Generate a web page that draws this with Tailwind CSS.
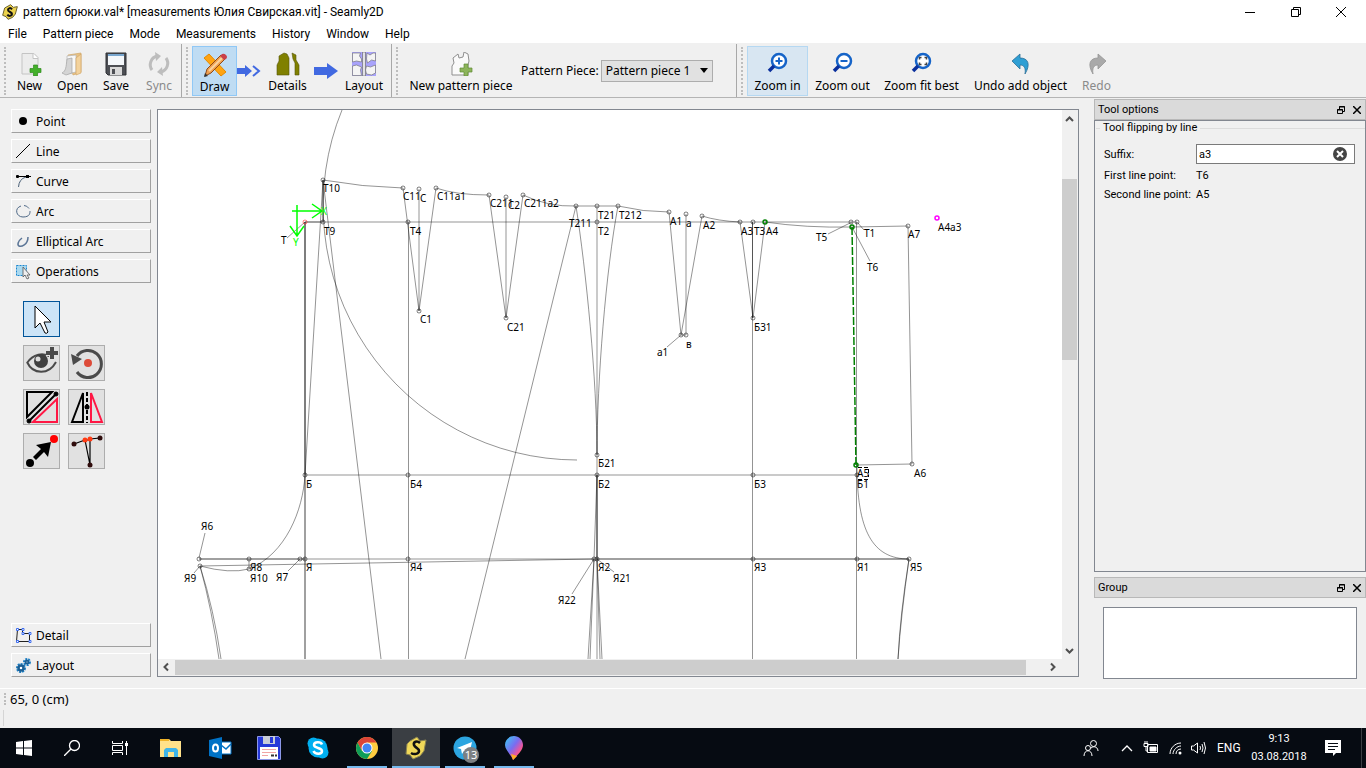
<!DOCTYPE html>
<html lang="en">
<head>
    <meta charset="UTF-8">
    <meta name="viewport" content="width=device-width, initial-scale=1.0">
    <title>pattern брюки.val* - Seamly2D</title>

    <!-- Include Tailwind CSS -->
    <script src="https://cdn.jsdelivr.net/npm/@tailwindcss/browser@4"></script>
</head>

<body class="h-screen flex flex-col overflow-hidden bg-[#f0f0f0] text-black font-['Noto_Sans','Open_Sans',sans-serif] text-[12px] leading-4 whitespace-nowrap">

    <!-- Title bar -->
    <header class="h-6 shrink-0 flex items-center bg-white pl-[2px] font-[Roboto,sans-serif]">
        <svg class="w-4 h-4 shrink-0" viewBox="0 0 24 24">
            <path d="M4 6l9-5 4 4 6-1-3 11-4 5-7 3-3-4-5-2z" fill="#ecd24c" stroke="#6b6230" stroke-width="1.500"/>
            <path d="M15 8c-2-3-6-2-6 1s6 3 6 6-5 4-7 1" fill="none" stroke="#111" stroke-width="3"/>
        </svg>
        <h1 class="ml-[5px]">pattern брюки.val* [measurements Юлия Свирская.vit] - Seamly2D</h1>
        <div class="ml-auto flex pr-[2px]">
            <button class="w-[46px] h-5 grid place-items-center" aria-label="Minimize">
                <svg class="w-[10px] h-[10px]" viewBox="0 0 10 10"><path d="M0 5.500h10" stroke="#000"/></svg>
            </button>
            <button class="w-[45px] h-5 grid place-items-center" aria-label="Restore">
                <svg class="w-[10px] h-[10px]" viewBox="0 0 10 10"><path d="M.5 2.500h7v7h-7zM2.500 2.500v-2h7v7h-2" fill="none" stroke="#000"/></svg>
            </button>
            <button class="w-[46px] h-5 grid place-items-center" aria-label="Close">
                <svg class="w-[10px] h-[10px]" viewBox="0 0 10 10"><path d="M0 0l10 10M10 0L0 10" stroke="#000"/></svg>
            </button>
        </div>
    </header>

    <!-- Menu -->
    <nav class="h-5 shrink-0 flex items-center gap-4 bg-white pl-2 border-b border-[#f0f0f0] font-[Roboto,sans-serif]">
        <button>File</button>
        <button>Pattern piece</button>
        <button>Mode</button>
        <button>Measurements</button>
        <button>History</button>
        <button>Window</button>
        <button>Help</button>
    </nav>

    <!-- Toolbar -->
    <div class="h-[54px] shrink-0 flex border-b border-[#b4b4b4]">
        <div class="w-[182px] flex items-center border-r border-[#a8a8a8] pl-1">
            <span class="w-1 h-12 border-l-2 border-dotted border-[#bdbdbd]"></span>
            <button class="w-[43px] h-[50px] flex flex-col items-center justify-end pb-[2px]">
                <svg class="w-6 h-6 mb-[2px]" viewBox="0 0 24 24">
                    <path d="M4 1.500h12l4 4v16.500H4z" fill="#ececec" stroke="#c4c4c4"/>
                    <path d="M15 1.500v5h5" fill="#fff" stroke="#c4c4c4"/>
                    <path d="M15.500 13h4v3.500H23v4h-3.500V24h-4v-3.500H12v-4h3.500z" fill="#43b02a" stroke="#2f8a1c" stroke-width=".7"/>
                </svg>
                <span>New</span>
            </button>
            <button class="w-[43px] h-[50px] flex flex-col items-center justify-end pb-[2px]">
                <svg class="w-6 h-6 mb-[2px]" viewBox="0 0 24 24">
                    <path d="M7 3l13-2v19l-8 3z" fill="#e8c183" stroke="#d1a868" stroke-width=".7"/>
                    <path d="M6 4l9-1v17l-9 2z" fill="#f8f8f8" stroke="#b5b5b5" stroke-width=".7"/>
                    <path d="M1 21c4-2 4-6 5-14l5-1v15l-6 2z" fill="#d4d4d4" stroke="#a5a5a5" stroke-width=".7"/>
                    <path d="M15 6l5-4v19l-5 2z" fill="#f3d29c" stroke="#d1a868" stroke-width=".7"/>
                </svg>
                <span>Open</span>
            </button>
            <button class="w-[44px] h-[50px] flex flex-col items-center justify-end pb-[2px]">
                <svg class="w-6 h-6 mb-[2px]" viewBox="0 0 24 24">
                    <path d="M2 1h20v22H4l-2-2z" fill="#4d4f54" stroke="#2f3135"/>
                    <path d="M4 2h16v11H4z" fill="#f4f7fa"/>
                    <path d="M4 2h16v2H4z" fill="#79a7cf"/>
                    <path d="M6 15h12v8H6z" fill="#d9d9d9"/>
                    <path d="M8 17h3v5H8z" fill="#4d4f54"/>
                </svg>
                <span>Save</span>
            </button>
            <button class="w-[42px] h-[50px] flex flex-col items-center justify-end pb-[2px] text-[#8a8a8a]" disabled>
                <svg class="w-6 h-6 mb-[2px]" viewBox="0 0 24 24" fill="none" stroke="#bdbdbd" stroke-width="3">
                    <path d="M5 18A9 9 0 0 1 10 4M19 6A9 9 0 0 1 14 20"/>
                    <path d="M8 0l6 4-5 5zM16 24l-6-4 5-5z" fill="#bdbdbd" stroke="none"/>
                </svg>
                <span>Sync</span>
            </button>
        </div>

        <div class="w-[210px] flex items-center border-r border-[#a8a8a8] pl-1">
            <span class="w-[6px] h-12 border-l-2 border-dotted border-[#bdbdbd]"></span>
            <button class="w-[45px] h-[50px] flex flex-col items-center justify-end bg-[#bfdcf3] border border-[#90c8f6]">
                <svg class="w-6 h-6 mb-[2px]" viewBox="0 0 24 24">
                    <path d="M6 1l17 18-5 4L1 5z" fill="#ffa412" stroke="#e58a00"/>
                    <path d="M2 23l2-7L18 2l4 4L8 20z" fill="#f0a050" stroke="#8c4a1c"/>
                    <path d="M6 18L20 4" stroke="#fbd2a0" stroke-width="2"/>
                    <path d="M17 3l2-2q2-1 4 1t0 4l-2 1z" fill="#c9404a"/>
                    <path d="M1 24l1-4 3 3z" fill="#333"/>
                </svg>
                <span>Draw</span>
            </button>
            <svg class="w-6 h-5" viewBox="0 0 24 20">
                <path d="M0 7h8V4l7 6-7 6v-3H0z" fill="#4169e1"/>
                <path d="M16 5l6 5-6 5" fill="none" stroke="#4169e1" stroke-width="2"/>
            </svg>
            <button class="w-[53px] h-[50px] flex flex-col items-center justify-end pb-[2px]">
                <svg class="w-6 h-6 mb-[2px]" viewBox="0 0 24 24" fill="#808000" stroke="#56560a" stroke-width=".6">
                    <path d="M1 23V13l2-4V4l5-3 3 1 2 4v17zM16 1l4 2v5l3 5v10h-4V11l-2-4z"/>
                </svg>
                <span>Details</span>
            </button>
            <svg class="w-6 h-5" viewBox="0 0 24 20"><path d="M0 6h13V2l11 8-11 8v-4H0z" fill="#4169e1"/></svg>
            <button class="w-[52px] h-[50px] flex flex-col items-center justify-end pb-[2px]">
                <svg class="w-6 h-6 mb-[2px]" viewBox="0 0 24 24">
                    <path d="M0 0h24v24H0z" fill="#a9a3fb"/>
                    <path d="M.5 1h8l-1 3 2 3V10l-5-1-4 1zM15 1l3 2 3-2h2.500v8l-4-1-4 3-1-4zM.5 14l4-1 5 2-1 3 1 5.500h-9zM14.500 14l4 1 5-2v8l-4 2-5-1-1-4z" fill="#f4f4f4" stroke="#77777d" stroke-width=".7"/>
                    <path d="M10.500 0h3v24h-3z" fill="#e2e2e5" stroke="#6d6d73" stroke-width=".7"/>
                </svg>
                <span>Layout</span>
            </button>
        </div>

        <div class="w-[345px] flex items-center border-r border-[#a8a8a8] pl-1">
            <span class="w-[6px] h-12 border-l-2 border-dotted border-[#bdbdbd]"></span>
            <button class="w-[118px] h-[50px] flex flex-col items-center justify-end pb-[2px]">
                <svg class="w-6 h-6 mb-[2px]" viewBox="0 0 24 24">
                    <path d="M3 23V14l2-3-1-5 5-4 1 4 4-1 1-5 4 2 1 7-1 4v10z" fill="#fafafa" stroke="#8f8f8f"/>
                    <path d="M15 12h4v4h4v4h-4v4h-4v-4h-4v-4h4z" fill="#8cb45a" stroke="#5f8a35" stroke-width=".7"/>
                </svg>
                <span>New pattern piece</span>
            </button>
            <label for="piece" class="ml-px">Pattern Piece:</label>
            <div class="relative ml-[2px]">
                <select id="piece" class="appearance-none block w-28 h-[22px] pl-1 bg-[#e1e1e1] border border-[#adadad] leading-5">
                    <option>Pattern piece 1</option>
                </select>
                <svg class="absolute right-[5px] top-2 w-2 h-[5px] pointer-events-none" viewBox="0 0 8 5"><path d="M0 0h8L4 5z"/></svg>
            </div>
        </div>

        <div class="flex-1 flex items-center pl-1">
            <span class="w-[6px] h-12 border-l-2 border-dotted border-[#bdbdbd]"></span>
            <button class="w-[61px] h-[50px] flex flex-col items-center justify-end pb-px bg-[#d8e6f2] border border-[#b5d8f2]">
                <svg class="w-6 h-6 mb-[2px]" viewBox="0 0 24 24" fill="none">
                    <circle cx="13" cy="9" r="7" fill="#fff" stroke="#1664c8" stroke-width="2.500"/>
                    <path d="M8 14l-5 5" stroke="#0a2f9c" stroke-width="3.500"/>
                    <path d="M13 5.500v7M9.500 9h7" stroke="#1664c8" stroke-width="2"/>
                </svg>
                <span>Zoom in</span>
            </button>
            <button class="w-[69px] h-[50px] flex flex-col items-center justify-end pb-[2px]">
                <svg class="w-6 h-6 mb-[2px]" viewBox="0 0 24 24" fill="none">
                    <circle cx="13" cy="9" r="7" fill="#fff" stroke="#1664c8" stroke-width="2.500"/>
                    <path d="M8 14l-5 5" stroke="#0a2f9c" stroke-width="3.500"/>
                    <path d="M9.500 9h7" stroke="#1664c8" stroke-width="2"/>
                </svg>
                <span>Zoom out</span>
            </button>
            <button class="w-[89px] h-[50px] flex flex-col items-center justify-end pb-[2px]">
                <svg class="w-6 h-6 mb-[2px]" viewBox="0 0 24 24" fill="none">
                    <circle cx="13" cy="9" r="7" fill="#fff" stroke="#1664c8" stroke-width="2.500"/>
                    <path d="M8 14l-5 5" stroke="#0a2f9c" stroke-width="3.500"/>
                    <path d="M9.500 7.500v-2h2M14.500 5.500h2v2M16.500 10.500v2h-2M11.500 12.500h-2v-2" stroke="#444" stroke-width="1.500"/>
                </svg>
                <span>Zoom fit best</span>
            </button>
            <button class="w-[109px] h-[50px] flex flex-col items-center justify-end pb-[2px]">
                <svg class="w-6 h-6 mb-[2px]" viewBox="0 0 24 24">
                    <path d="M3 9l8-7v4c8 0 11 6 5 16 1-6-1-9-5-9v4z" fill="#2f9fd4" stroke="#2b6f98" stroke-width=".8"/>
                </svg>
                <span>Undo add object</span>
            </button>
            <button class="w-[43px] h-[50px] flex flex-col items-center justify-end pb-[2px] text-[#8a8a8a]" disabled>
                <svg class="w-6 h-6 mb-[2px]" viewBox="0 0 24 24">
                    <path d="M21 9l-8-7v4c-8 0-11 6-5 16-1-6 1-9 5-9v4z" fill="#a9a9a9" stroke="#969696" stroke-width=".8"/>
                </svg>
                <span>Redo</span>
            </button>
        </div>
    </div>

    <!-- Work area -->
    <main class="flex-1 min-h-0 flex">

        <!-- Tool box -->
        <aside class="w-[157px] shrink-0 flex flex-col pt-[11px] pb-[11px] pl-[11px] pr-[6px]">
            <div class="flex flex-col gap-[6px]">
                <button class="h-6 flex items-center gap-1 pl-1 pt-[2px] border border-t-white border-l-white border-r-[#a0a0a0] border-b-[#a0a0a0]">
                    <svg class="w-4 h-4" viewBox="0 0 16 16"><circle cx="7" cy="7" r="4"/></svg>Point
                </button>
                <button class="h-6 flex items-center gap-1 pl-1 pt-[2px] border border-t-white border-l-white border-r-[#a0a0a0] border-b-[#a0a0a0]">
                    <svg class="w-4 h-4" viewBox="0 0 16 16"><path d="M0 14L14 0" stroke="#000"/></svg>Line
                </button>
                <button class="h-6 flex items-center gap-1 pl-1 pt-[2px] border border-t-white border-l-white border-r-[#a0a0a0] border-b-[#a0a0a0]">
                    <svg class="w-4 h-4" viewBox="0 0 16 16" fill="none"><path d="M2.500 13Q3 5 10 3" stroke="#4a6078"/><path d="M1 2.500h14M.5 1.500h2v2h-2z" stroke="#000"/><path d="M10 1h3v3h-3z" fill="#000"/></svg>Curve
                </button>
                <button class="h-6 flex items-center gap-1 pl-1 pt-[2px] border border-t-white border-l-white border-r-[#a0a0a0] border-b-[#a0a0a0]">
                    <svg class="w-4 h-4" viewBox="0 0 16 16"><path d="M5 2C-2 4 0 13 7 13S14 9 14 7M8 1.500q3 0 5 3" fill="none" stroke="#4f6987"/></svg>Arc
                </button>
                <button class="h-6 flex items-center gap-1 pl-1 pt-[2px] border border-t-white border-l-white border-r-[#a0a0a0] border-b-[#a0a0a0]">
                    <svg class="w-4 h-4" viewBox="0 0 16 16"><path d="M6 4C2 7 1 11 3 12S12 11 12 3" fill="none" stroke="#5b7596" stroke-width="1.500"/></svg>Elliptical Arc
                </button>
                <button class="h-6 flex items-center gap-1 pl-1 pt-[2px] border border-t-white border-l-white border-r-[#a0a0a0] border-b-[#a0a0a0]">
                    <svg class="w-4 h-4" viewBox="0 0 16 16"><path d="M.5 1.500h10v10H.5z" fill="#a9d9f0" stroke="#1a86cf" stroke-dasharray="2 1"/><path d="M7 3v10l2-2 2 4 2-1-2-3h3z" fill="#eee" stroke="#555" stroke-width=".8"/></svg>Operations
                </button>
            </div>

            <div class="grid grid-cols-[37px_37px] auto-rows-[36px] gap-2 pl-3 pt-[18px]">
                <button class="col-start-1 grid place-items-center bg-[#cce4f7] border border-[#005499]" aria-label="Pointer">
                    <svg class="w-[34px] h-[34px]" viewBox="0 0 34 34"><path d="M10 4v22l5-5 5 10q2 1 3-1l-4-10h7z" fill="#fff" stroke="#000"/></svg>
                </button>
                <button class="col-start-1 grid place-items-center bg-[#e1e1e1] border border-[#adadad]" aria-label="Group">
                    <svg class="w-[34px] h-[34px]" viewBox="0 0 34 34" fill="none" stroke="#4a4a4a">
                        <path d="M2 17C8 8 18 6 26 11M2 16C8 29 24 29 31 16" stroke-width="2"/>
                        <circle cx="16" cy="15" r="7" fill="#3f3f3f" stroke="none"/>
                        <circle cx="13" cy="13" r="2.500" fill="#ddd" stroke="none"/>
                        <path d="M27 1v12M21 7h12" stroke="#e1e1e1" stroke-width="6"/>
                        <path d="M27 1v12M21 7h12" stroke-width="4"/>
                    </svg>
                </button>
                <button class="grid place-items-center bg-[#e1e1e1] border border-[#adadad]" aria-label="Rotation">
                    <svg class="w-[34px] h-[34px]" viewBox="0 0 34 34">
                        <path d="M7 10A13.500 13.500 0 1 1 7 26" fill="none" stroke="#4a4a4a" stroke-width="3"/>
                        <path d="M1 8l11 5-9 6z" fill="#4a4a4a"/><circle cx="18" cy="17" r="4" fill="#dd4b39"/>
                    </svg>
                </button>
                <button class="grid place-items-center bg-[#e1e1e1] border border-[#adadad]" aria-label="Flipping by line">
                    <svg class="w-[34px] h-[34px]" viewBox="0 0 34 34" fill="none" stroke="#000" stroke-width="2">
                        <path d="M2 27V2h25zM4 31L31 4"/><path d="M8 32L32 9v23z" stroke="#ff1744"/>
                        <circle cx="4" cy="31" r="2" fill="#000" stroke-width="1"/><circle cx="31" cy="4" r="2" fill="#000" stroke-width="1"/>
                    </svg>
                </button>
                <button class="grid place-items-center bg-[#e1e1e1] border border-[#adadad]" aria-label="Flipping by axis">
                    <svg class="w-[34px] h-[34px]" viewBox="0 0 34 34" fill="none" stroke="#000" stroke-width="2">
                        <path d="M2 32L13 3v29z"/><path d="M32 32L21 3v29z" stroke="#ff1744"/>
                        <path d="M17 2v31" stroke-dasharray="4 2"/><circle cx="17" cy="17" r="2.500" fill="#000" stroke="none"/>
                    </svg>
                </button>
                <button class="grid place-items-center bg-[#e1e1e1] border border-[#adadad]" aria-label="Moving">
                    <svg class="w-[34px] h-[34px]" viewBox="0 0 34 34">
                        <circle cx="5" cy="29" r="4"/><circle cx="29" cy="5" r="4" fill="#f00"/>
                        <path d="M8 23l8-8-5-4 15-3-3 15-4-5-8 8z"/>
                    </svg>
                </button>
                <button class="grid place-items-center bg-[#e1e1e1] border border-[#adadad]" aria-label="True darts">
                    <svg class="w-[34px] h-[34px]" viewBox="0 0 34 34">
                        <path d="M4 10l11-4 5 25V5l10-1M15 6h5" fill="none" stroke="#000" stroke-width="1.200"/>
                        <g fill="#300d0d"><circle cx="4" cy="10" r="2.500"/><circle cx="30" cy="4" r="2.500"/><circle cx="20" cy="31" r="2.500"/></g>
                        <g fill="#ff3b14"><circle cx="15" cy="6" r="2.500"/><circle cx="20" cy="5" r="2.500"/></g>
                    </svg>
                </button>
            </div>

            <div class="mt-auto flex flex-col gap-[6px]">
                <button class="h-6 flex items-center gap-1 pl-1 pt-[2px] border border-t-white border-l-white border-r-[#a0a0a0] border-b-[#a0a0a0]">
                    <svg class="w-4 h-4" viewBox="0 0 16 16"><path d="M1.500 1.500h5v4h7v8h-13z" fill="none" stroke="#222"/><path d="M.5.5h2v2h-2zM6 .5h2v2H6zM6 4.500h2v2H6zM13 4.500h2v2h-2zM.5 12.500h2v2h-2zM13 12.500h2v2h-2z" fill="#fff" stroke="#3c6cf0"/></svg>Detail
                </button>
                <button class="h-6 flex items-center gap-1 pl-1 pt-[2px] border border-t-white border-l-white border-r-[#a0a0a0] border-b-[#a0a0a0]">
                    <svg class="w-4 h-4" viewBox="0 0 16 16" fill="#fff"><circle cx="5" cy="10" r="4" stroke="#1d7fc4" stroke-width="2" stroke-dasharray="2 1"/><circle cx="5" cy="10" r="2.500" stroke="#1b5f94" stroke-width="2.500"/><circle cx="11" cy="4" r="3" stroke="#1d7fc4" stroke-width="2" stroke-dasharray="2 1"/><circle cx="11" cy="4" r="1.500" stroke="#1b5f94" stroke-width="2"/></svg>Layout
                </button>
            </div>
        </aside>

        <!-- Drawing -->
        <section class="flex-1 min-w-0 my-[11px] border border-[#828790] grid grid-cols-[1fr_16px] grid-rows-[1fr_17px] bg-[#f0f0f0]">
            <div class="bg-white overflow-hidden min-h-0 min-w-0">
                <svg class="w-full h-full" fill="none" stroke="#000">
                    <g transform="translate(-158 -110)">
                        <g stroke-opacity=".42">
                            <!-- Grid -->
                            <path d="M305 222H857M305 475H857M199 559H909M305 222V659M408.500 222V659M597 206V659M752.500 222V659M856.500 222V659"/>
                            <path d="M305 222V659M305 222V475M305 222H323M323 180V222M323 180V222M199 559H305M597 559H909M752.500 222V318M597 475V559"/>
                            <!-- Waist and darts -->
                            <path d="M323 180Q362 187 403 188L419 311M419 189V311L436 188Q456 195 489 195L506 318M506 197V318L523 195Q548 207 576 206H618Q643 212 669 212L681 335H686V214M681 335L702 216Q718 221 740 222L753 318L765 222Q806 228 852 227L908 226L912 464L856 465"/>
                            <path d="M576 206L465 659M576 206C586 270 597 380 597 455M618 206C606 270 597 380 597 455"/>
                            <!-- Back -->
                            <path d="M342 110A254 254 0 0 0 577 460M323 180L381 659M323 180L305 475C303 510 286 554 249 569Q230 574 200 566L594 559M249 559V569"/>
                            <path d="M200 566Q212 610 219 659M200 566Q214 610 221 659"/>
                            <!-- Front -->
                            <path d="M857 465C857 530 872 559 909 559Q900 615 898 659M909 559Q901 615 898 659M597 475L594 559L588 659M594 559L590 659M597 475L597 559L602 659M597 559L600 659"/>
                            <!-- Label leaders -->
                            <path d="M305 222L287 238M199 558L205 533M200 566L194 573M300 559L288 571M594 559L572 594M597 559L614 572M681 335L667 347M852 222L828 234M857 222L864 230M852 227L870 261"/>
                        </g>
                        <path d="M852 227L856 465" stroke="#008000" stroke-width="1.500" stroke-dasharray="8 2"/>
                        <path d="M292 211H322M312 204L322 211L312 218M297 205V235M290 226L297 236L304 226" stroke="#00ff00" stroke-width="1.500"/>
                        <path d="M858 467.500h10M868.500 469v8M858 479.500h10" stroke-dasharray="4 2"/>
                        <g id="points"></g>
                        <g id="labels" fill="#000" stroke="none" class="text-[10px]"></g>
                    </g>
                </svg>
            </div>
            <!-- Vertical scroll bar -->
            <div class="flex flex-col items-center">
                <svg class="w-4 h-[17px] shrink-0" viewBox="0 0 16 17"><path d="M4 11l3.500-3.500L11 11" fill="none" stroke="#505050" stroke-width="2"/></svg>
                <div class="flex-1 w-full pr-px flex flex-col">
                    <div class="flex-[52]"></div>
                    <div class="flex-[181] bg-[#cdcdcd]"></div>
                    <div class="flex-[282]"></div>
                </div>
                <svg class="w-4 h-[17px] shrink-0" viewBox="0 0 16 17"><path d="M4 7l3.500 3.500L11 7" fill="none" stroke="#505050" stroke-width="2"/></svg>
            </div>
            <!-- Horizontal scroll bar -->
            <div class="flex items-center">
                <svg class="w-[17px] h-[17px] shrink-0" viewBox="0 0 17 17"><path d="M10 4.500L6.500 8l3.500 3.500" fill="none" stroke="#505050" stroke-width="2"/></svg>
                <div class="flex-1 h-full py-px flex">
                    <div class="flex-[851] bg-[#cdcdcd]"></div>
                    <div class="flex-[19]"></div>
                </div>
                <svg class="w-[17px] h-[17px] shrink-0" viewBox="0 0 17 17"><path d="M6 4.500L9.500 8 6 11.500" fill="none" stroke="#505050" stroke-width="2"/></svg>
            </div>
        </section>

        <!-- Docks -->
        <aside class="w-[272px] shrink-0 ml-[15px] pt-px pb-[9px] flex flex-col text-[11px] font-[Roboto,sans-serif]">
            <div class="h-[21px] shrink-0 flex items-center bg-[#dadada] border border-[#b8b8b8] pl-[3px]">
                <h2 class="flex-1">Tool options</h2>
                <button class="w-4 h-4 grid place-items-center" aria-label="Float"><svg class="w-2 h-2" viewBox="0 0 8 8" fill="none" stroke="#000"><path d="M.5 3.500h5v4h-5zM0 4h6M2.500 3V.5h5v5H6M2 1h6"/></svg></button>
                <button class="w-4 h-4 grid place-items-center" aria-label="Close"><svg class="w-2 h-2" viewBox="0 0 8 8"><path d="M0 0l8 8M8 0L0 8" stroke="#000" stroke-width="1.500"/></svg></button>
            </div>
            <div class="flex-1 min-h-0 border border-[#828790] pl-px">
                <fieldset class="h-full border-t border-[#dcdcdc]">
                    <legend class="ml-1 px-[3px] leading-[14px]">Tool flipping by line</legend>
                    <div class="grid grid-cols-[92px_1fr] items-center pl-2 pr-[10px] pt-[9px] gap-y-[3px]">
                        <label for="suffix">Suffix:</label>
                        <div class="relative mb-px">
                            <input id="suffix" type="text" value="a3" class="block w-full h-5 bg-white border border-[#7a7a7a] px-[2px]">
                            <svg class="absolute right-2 top-[3px] w-[14px] h-[14px]" viewBox="0 0 14 14"><circle cx="7" cy="7" r="7" fill="#444"/><path d="M4 4l6 6M10 4l-6 6" stroke="#fff" stroke-width="2"/></svg>
                        </div>
                        <span>First line point:</span><span>T6</span>
                        <span>Second line point:</span><span>A5</span>
                    </div>
                </fieldset>
            </div>
            <div class="h-[21px] mt-[5px] shrink-0 flex items-center bg-[#dadada] border border-[#b8b8b8] pl-[3px]">
                <h2 class="flex-1">Group</h2>
                <button class="w-4 h-4 grid place-items-center" aria-label="Float"><svg class="w-2 h-2" viewBox="0 0 8 8" fill="none" stroke="#000"><path d="M.5 3.500h5v4h-5zM0 4h6M2.500 3V.5h5v5H6M2 1h6"/></svg></button>
                <button class="w-4 h-4 grid place-items-center" aria-label="Close"><svg class="w-2 h-2" viewBox="0 0 8 8"><path d="M0 0l8 8M8 0L0 8" stroke="#000" stroke-width="1.500"/></svg></button>
            </div>
            <div class="h-[72px] mt-[9px] mx-[9px] shrink-0 bg-white border border-[#828790]"></div>
        </aside>
    </main>

    <!-- Status bar -->
    <footer class="h-10 shrink-0 border-t border-white flex flex-col">
        <div class="h-5 flex items-center pl-1">
            <span class="w-[6px] h-3 border-l-2 border-dotted border-[#bdbdbd]"></span>
            <span class="text-[13px]">65, 0 (cm)</span>
        </div>
        <div class="h-4 mt-px ml-[3px] border-l border-[#d5d5d5]"></div>
    </footer>

    <!-- Taskbar -->
    <div class="h-10 shrink-0 flex items-center bg-[#060b12] text-white">
        <button class="w-12 h-10 grid place-items-center" aria-label="Start">
            <svg class="w-4 h-4" viewBox="0 0 16 16" fill="#fff"><path d="M0 2l7-1v6.500H0zM8 1l8-1v7.500H8zM0 8.500h7V15l-7-1zM8 8.500h8V16l-8-1z"/></svg>
        </button>
        <button class="w-12 h-10 grid place-items-center" aria-label="Search">
            <svg class="w-4 h-4" viewBox="0 0 16 16" fill="none" stroke="#fff" stroke-width="1.300"><circle cx="10.500" cy="5.500" r="5"/><path d="M7 9l-7 7"/></svg>
        </button>
        <button class="w-12 h-10 grid place-items-center" aria-label="Task view">
            <svg class="w-4 h-4" viewBox="0 0 16 16" fill="none" stroke="#fff"><path d="M.5 1v2.500h10V1M.5 5.500h10v5H.5zM.5 15v-2.500h10V15M14.500 1v2M14.500 6v9"/><path d="M13 3h3v3h-3z" fill="#fff" stroke="none"/></svg>
        </button>
        <div class="ml-[3px] flex gap-px">
            <button class="w-12 h-10 grid place-items-center" aria-label="Explorer">
                <svg class="w-6 h-6" viewBox="0 0 24 24"><path d="M1 3h9l2 2h10v16H1z" fill="#ffe28a"/><path d="M1 3h9v2H1z" fill="#f0b429"/><path d="M5 21v-7l2-2h10l2 2v7h-4v-5H9v5z" fill="#3fb4e8"/></svg>
            </button>
            <button class="w-12 h-10 grid place-items-center" aria-label="Outlook">
                <svg class="w-6 h-6" viewBox="0 0 24 24"><path d="M12 6h11v12H12z" fill="#fff" stroke="#0072c6"/><path d="M13 9l5 4 5-5" fill="none" stroke="#0072c6" stroke-width="1.500"/><path d="M1 4l13-3v22L1 20z" fill="#0072c6"/><ellipse cx="7.500" cy="12" rx="2.500" ry="3.500" fill="none" stroke="#fff" stroke-width="2"/></svg>
            </button>
            <button class="w-12 h-10 grid place-items-center" aria-label="Total Commander">
                <svg class="w-6 h-6" viewBox="0 0 24 24"><path d="M.5.500h21l2 2v21H.5z" fill="#2538d8" stroke="#8c98e8"/><path d="M6 0h12v8H6z" fill="#c8ccd8"/><path d="M13 1h3v6h-3z" fill="#2538d8"/><path d="M3 11h18v12H3z" fill="#fff"/><path d="M5 13.500h14M5 16.500h14M5 19.500h6" stroke="#f0a5a5"/><path d="M14 19.500h3M18 19.500h2" stroke="#333" stroke-width="2"/></svg>
            </button>
            <button class="w-12 h-10 grid place-items-center" aria-label="Skype">
                <svg class="w-6 h-6" viewBox="0 0 24 24"><circle cx="12" cy="12" r="9.500" fill="#00aff0"/><circle cx="7.500" cy="7.500" r="6" fill="#00aff0"/><circle cx="16.500" cy="16.500" r="6" fill="#00aff0"/><path d="M16 8.500C15 5.500 8 5.500 8 9s8 2.500 8 6-7 3.500-8.500 0" fill="none" stroke="#fff" stroke-width="2.500"/></svg>
            </button>
            <button class="w-12 h-10 grid place-items-center relative" aria-label="Chrome">
                <svg class="w-6 h-6" viewBox="0 0 24 24"><circle cx="12" cy="12" r="11" fill="#ffcd40"/><path d="M2.500 6.500A11 11 0 0 1 21.500 6.500H12L7 15z" fill="#db4437"/><path d="M2.500 6.500A11 11 0 0 0 12 23l5-8-10 0z" fill="#0f9d58"/><circle cx="12" cy="12" r="5.500" fill="#fff"/><circle cx="12" cy="12" r="4.500" fill="#4285f4"/></svg>
                <span class="absolute bottom-0 inset-x-1 h-[2px] bg-[#76b9ed]"></span>
            </button>
            <button class="w-12 h-10 grid place-items-center relative bg-[#3a3e43]" aria-label="Seamly2D">
                <svg class="w-6 h-6" viewBox="0 0 24 24"><path d="M3 8l3-3 7-4 3 4 6-1-2 11-4 5-7 3-3-4-4-1z" fill="#f0d858" stroke="#8a8250"/><path d="M16 7c-3-3-7-1-6 2s5 3 5 6-5 4-8 2" fill="none" stroke="#111" stroke-width="2.500"/></svg>
                <span class="absolute bottom-0 inset-x-0 h-[2px] bg-[#76b9ed]"></span>
            </button>
            <button class="w-12 h-10 grid place-items-center relative" aria-label="Telegram">
                <svg class="w-6 h-6" viewBox="0 0 24 24"><circle cx="12" cy="12" r="11.500" fill="#2ca5e0"/><path d="M4 12l15-6-3 13-5-4-2 3-1-5z" fill="#fff"/></svg>
                <span class="absolute right-[10px] bottom-[5px] w-4 h-4 rounded-full bg-[#7c7f82] text-[11px] text-center">13</span>
                <span class="absolute bottom-0 inset-x-1 h-[2px] bg-[#76b9ed]"></span>
            </button>
            <button class="w-12 h-10 grid place-items-center relative" aria-label="Paint 3D">
                <svg class="w-6 h-6" viewBox="0 0 24 24">
                    <defs><linearGradient id="drop" x1="0" y1="0" x2="1" y2="1"><stop offset="0" stop-color="#35d0f5"/><stop offset=".45" stop-color="#7a6cf0"/><stop offset=".7" stop-color="#f0559a"/><stop offset="1" stop-color="#ffb020"/></linearGradient></defs>
                    <path d="M12 0c5 0 9 4 9 9s-5 9-7 12l-3 3c-1-4-8-10-8-15s4-9 9-9z" fill="url(#drop)"/>
                    <path d="M9 18l3 1 3 1-4 4z" fill="#ffb020"/>
                </svg>
                <span class="absolute bottom-0 inset-x-1 h-[2px] bg-[#76b9ed]"></span>
            </button>
        </div>

        <div class="ml-auto flex items-center font-[Roboto,sans-serif]">
            <svg class="w-4 h-4" viewBox="0 0 16 16" fill="none" stroke="#fff"><circle cx="10.500" cy="3.500" r="3"/><circle cx="5" cy="8" r="2.500"/><path d="M1 16c0-7 8-7 8 0M8 8c4-3 7 0 7 3"/></svg>
            <svg class="w-3 h-4 ml-[22px]" viewBox="0 0 12 16" fill="none" stroke="#fff" stroke-width="1.300"><path d="M1 11l5-5 5 5"/></svg>
            <svg class="w-4 h-4 ml-[10px]" viewBox="0 0 16 16" fill="none" stroke="#fff"><path d="M4.500 4.500h10v8h-10zM1 3.500h4v3H1zM2 3V1M4 3V1M3 7v4h2"/><path d="M7 7h6v4H7z" fill="#fff"/></svg>
            <svg class="w-4 h-4 ml-2" viewBox="0 0 16 16" fill="none" stroke="#fff"><path d="M3 14C3 8 8 3 14 3M6 14c0-4 4-8 8-8M9 14c0-3 2-5 5-5"/><circle cx="13" cy="13" r="1.500" fill="#fff" stroke="none"/></svg>
            <svg class="w-4 h-4 ml-2" viewBox="0 0 16 16" fill="none" stroke="#fff"><path d="M.5 6v4h2l4 3V3l-4 3zM9 6q1 2 0 4M11 4q2 4 0 8M13 2q3 6 0 12"/></svg>
            <span class="ml-[10px] w-6">ENG</span>
            <div class="ml-2 w-[60px] text-center text-[11px] leading-[18px]">
                <div>9:13</div>
                <div>03.08.2018</div>
            </div>
            <svg class="w-4 h-4 ml-4" viewBox="0 0 16 16"><path d="M0 0h16v13h-5l-3 3v-3H0z" fill="#fff"/><path d="M3 3.500h10M3 6.500h10M3 9.500h7" stroke="#060b12"/></svg>
            <span class="ml-5 mr-1 w-px h-10 bg-[#3a3e43]"></span>
        </div>
    </div>

    <script>
        // Points of the pattern: x, y
        const points = [
            [323, 180], [323, 222], [403, 188], [419, 189], [436, 188], [408, 222], [419, 311],
            [489, 195], [506, 197], [523, 195], [506, 318], [576, 206], [597, 206], [618, 206], [597, 222],
            [669, 212], [686, 214], [702, 216], [681, 335], [686, 335], [740, 222], [753, 222], [753, 318],
            [851, 222], [857, 222], [908, 226], [912, 464], [597, 455],
            [305, 475], [408, 475], [597, 475], [753, 475], [857, 475],
            [199, 559], [249, 559], [300, 559], [305, 559], [408, 559], [594, 559], [597, 559], [753, 559], [857, 559], [909, 559],
            [200, 566], [249, 569]
        ];

        // Labels: text, x, baseline
        const labels = [
            ['T10', 323, 192], ['T9', 324, 235], ['T', 281, 244], ['T4', 410, 235], ['C11', 403, 200], ['C', 420, 202], ['C11a1', 437, 200],
            ['C1', 420, 323], ['C211', 490, 207], ['C2', 508, 209], ['C211a2', 524, 207], ['C21', 507, 331],
            ['T211', 569, 227], ['T21', 598, 219], ['T212', 619, 219], ['T2', 598, 235],
            ['A1', 670, 225], ['a', 686, 227], ['A2', 703, 229], ['a1', 657, 356], ['в', 686, 348],
            ['A3', 741, 235], ['T3', 754, 235], ['A4', 766, 235], ['Б31', 754, 331],
            ['T5', 816, 241], ['T1', 864, 237], ['T6', 867, 271], ['A7', 908, 238], ['A4a3', 938, 231],
            ['A5', 857, 477], ['A6', 914, 477], ['Б21', 598, 467],
            ['Б', 306, 488], ['Б4', 410, 488], ['Б2', 598, 488], ['Б3', 754, 488], ['Б1', 857, 488],
            ['Я6', 201, 530], ['Я9', 184, 582], ['Я8', 250, 571], ['Я10', 250, 582], ['Я7', 276, 581],
            ['Я', 306, 571], ['Я4', 410, 571], ['Я2', 598, 571], ['Я21', 613, 582], ['Я22', 558, 604],
            ['Я3', 754, 571], ['Я1', 857, 571], ['Я5', 910, 571]
        ];

        function circle(x, y, color, width) {
            return `<circle cx="${x}" cy="${y}" r="2" stroke="${color}" stroke-width="${width}"/>`;
        }

        const pointLayer = document.getElementById('points');
        points.forEach(([x, y]) => {
            pointLayer.innerHTML += circle(x, y, '#00000080', 1);
        });
        pointLayer.innerHTML += circle(305, 222, '#ff000080', 1);
        // Selected objects
        pointLayer.innerHTML += circle(765, 222, '#008000', 1.5) + circle(852, 227, '#008000', 1.5) + circle(856, 465, '#008000', 1.5);
        // Preview of the flipped point
        pointLayer.innerHTML += circle(937, 218, '#ff00ff', 1.5);

        const labelLayer = document.getElementById('labels');
        labels.forEach(([text, x, y]) => {
            labelLayer.innerHTML += `<text x="${x}" y="${y}">${text}</text>`;
        });
        labelLayer.innerHTML += '<text x="321" y="215" fill="#00ff00">X</text><text x="293" y="246" fill="#00ff00">Y</text>';
    </script>
</body>
</html>
